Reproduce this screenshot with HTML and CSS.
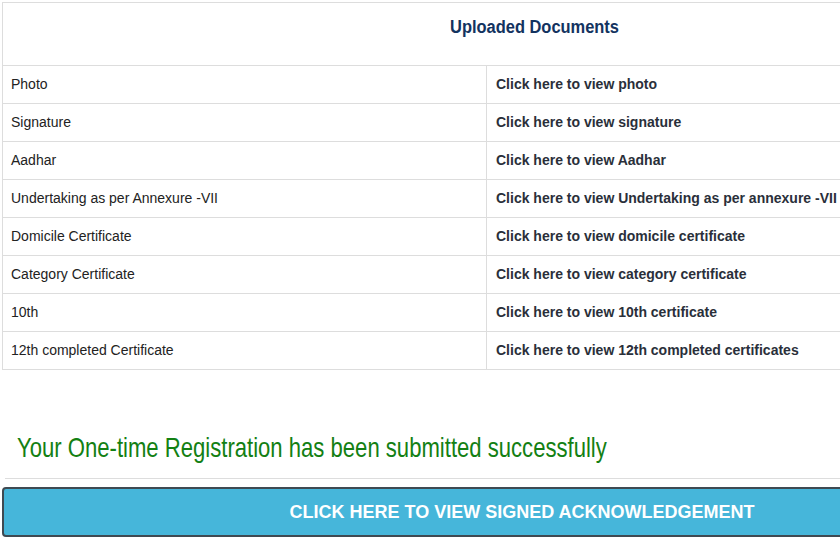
FILE: index.html
```html
<!DOCTYPE html>
<html>
<head>
<meta charset="utf-8">
<link rel="stylesheet" href="styles.css">
</head>
<body>
<div class="page">
  <table class="docs">
    <tr><th colspan="2" class="head"><span class="head-text">Uploaded Documents</span></th></tr>
    <tr><td class="name">Photo</td><td class="link">Click here to view photo</td></tr>
    <tr><td class="name">Signature</td><td class="link">Click here to view signature</td></tr>
    <tr><td class="name">Aadhar</td><td class="link">Click here to view Aadhar</td></tr>
    <tr><td class="name">Undertaking as per Annexure -VII</td><td class="link">Click here to view Undertaking as per annexure -VII</td></tr>
    <tr><td class="name">Domicile Certificate</td><td class="link">Click here to view domicile certificate</td></tr>
    <tr><td class="name">Category Certificate</td><td class="link">Click here to view category certificate</td></tr>
    <tr><td class="name">10th</td><td class="link">Click here to view 10th certificate</td></tr>
    <tr><td class="name">12th completed Certificate</td><td class="link">Click here to view 12th completed certificates</td></tr>
  </table>
  <div class="success">Your One-time Registration has been submitted successfully</div>
  <hr class="rule">
  <div class="btn">CLICK HERE TO VIEW SIGNED ACKNOWLEDGEMENT</div>
</div>
</body>
</html>
```
FILE: styles.css
```css
html, body {
  margin: 0;
  padding: 0;
  overflow: hidden;
  background: #fff;
  font-family: "Liberation Sans", Arial, sans-serif;
}
.page {
  padding: 2px 0 0 2px;
  width: 1100px;
}
.docs {
  border-collapse: collapse;
  width: 1066px;
  border: 1px solid #ddd;
}
.docs th, .docs td {
  border: 1px solid #ddd;
}
.head {
  height: 63px;
  box-sizing: border-box;
  padding: 0 0 14px 0;
  font-size: 18px;
  font-weight: bold;
  color: #13335f;
  text-align: center;
  vertical-align: middle;
}
.head-text {
  display: inline-block;
  transform: scaleX(0.913);
  transform-origin: center center;
}
.docs td {
  padding: 8px 8px;
  line-height: 21px;
  font-size: 14px;
  vertical-align: middle;
}
.name {
  width: 467px;
  color: #222;
}
.link {
  padding-left: 9px !important;
  font-weight: bold;
  color: #2a2f3a;
}
.success {
  margin: 62px 0 0 15px;
  font-size: 28px;
  line-height: 32px;
  color: #138013;
  transform: scaleX(0.789);
  transform-origin: left center;
  white-space: nowrap;
}
.rule {
  margin: 14px 0 0 3px;
  border: 0;
  border-top: 1px solid #ddd;
  height: 0;
}
.btn {
  margin-top: 8px;
  width: 1040px;
  height: 50px;
  box-sizing: border-box;
  border: 2px solid #3f4a52;
  border-radius: 4px;
  background: #46b6da;
  color: #fff;
  font-size: 18px;
  font-weight: bold;
  text-align: center;
  line-height: 46px;
}
```
